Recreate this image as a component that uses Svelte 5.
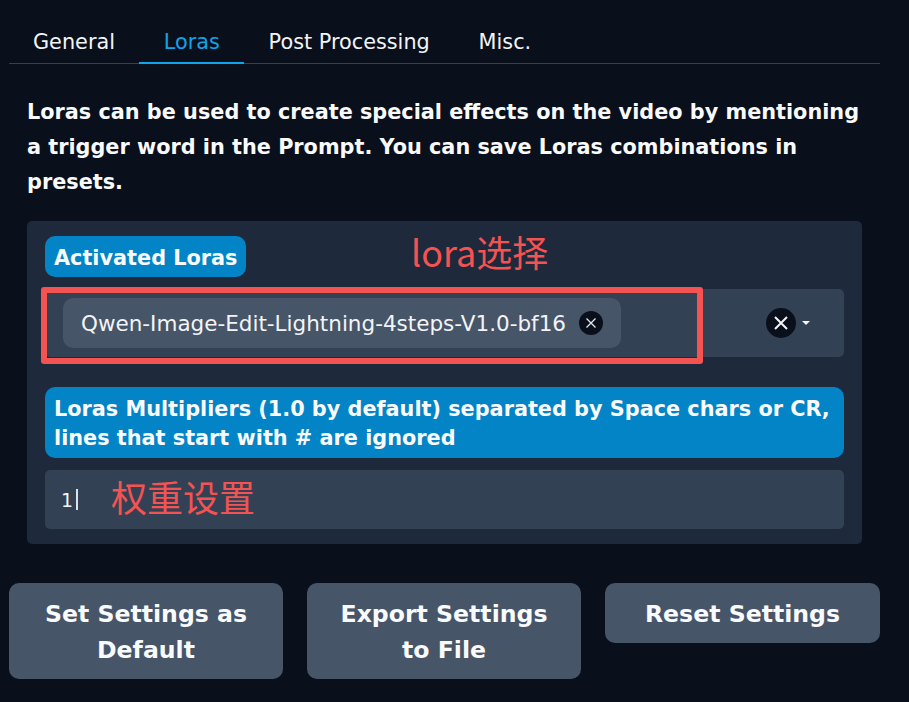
<script>
  const tabs = ['General', 'Loras', 'Post Processing', 'Misc.'];
  const selected = 'Loras';
  const buttons = ['Set Settings as Default', 'Export Settings to File', 'Reset Settings'];
</script>

<div class="page">
  <div class="tabs">
    {#each tabs as tab}
      <button class="tab" class:active={tab === selected}>{tab}</button>
    {/each}
  </div>

  <p class="intro">
    Loras can be used to create special effects on the video by mentioning a trigger word in the Prompt. You can save Loras combinations in presets.
  </p>

  <div class="card">
    <div class="label short">Activated Loras</div>
    <span class="note note-lora">lora选择</span>
    <div class="select">
      <div class="chip">
        <span>Qwen-Image-Edit-Lightning-4steps-V1.0-bf16</span>
        <span class="chip-x">
          <svg width="12" height="12" viewBox="0 0 12 12"><path d="M1.5 1.5l9 9M10.5 1.5l-9 9" stroke="#e5e7eb" stroke-width="1.3" /></svg>
        </span>
      </div>
      <span class="clear">
        <svg width="14" height="14" viewBox="0 0 14 14"><path d="M1 1l12 12M13 1L1 13" stroke="#f3f4f6" stroke-width="2" /></svg>
      </span>
      <span class="caret"></span>
    </div>
    <div class="highlight"></div>

    <div class="label wide">Loras Multipliers (1.0 by default) separated by Space chars or CR, lines that start with # are ignored</div>
    <div class="textarea">
      <span class="value">1</span><span class="cursor"></span>
      <span class="note note-weight">权重设置</span>
    </div>
  </div>

  <div class="actions">
    {#each buttons as label}
      <button class="action">{label}</button>
    {/each}
  </div>
</div>

<style>
  :global(body) {
    background: #0a0f1c;
  }

  .page {
    box-sizing: border-box;
    width: 909px;
    height: 702px;
    padding: 21px 29px 0 9px;
    font-family: "DejaVu Sans", sans-serif;
    color: #f3f4f6;
    background: #0a0f1c;
    overflow: hidden;
  }

  .tabs {
    display: flex;
    height: 42px;
    border-bottom: 1px solid #334155;
  }

  .tab {
    box-sizing: border-box;
    height: 43px;
    padding: 0 24.4px;
    background: none;
    border: none;
    border-bottom: 2px solid transparent;
    font: 20.8px/38px "DejaVu Sans", sans-serif;
    color: #f3f4f6;
    white-space: nowrap;
  }

  .tab:first-child {
    padding-left: 24px;
  }

  .tab.active {
    color: #0ea5e9;
    border-bottom-color: #0ea5e9;
  }

  .intro {
    margin: 31px 0 21px 18px;
    width: 840px;
    font-size: 20.8px;
    line-height: 35px;
    font-weight: 700;
    color: #f9fafb;
  }

  .card {
    position: relative;
    box-sizing: border-box;
    width: 835px;
    height: 323px;
    margin-left: 18px;
    padding: 15px 18px;
    background: #1e293b;
    border-radius: 5px;
  }

  .label {
    box-sizing: border-box;
    padding: 4px 9px;
    background: #0284c7;
    border-radius: 10px;
    font-size: 20.8px;
    line-height: 29px;
    font-weight: 700;
    color: #f9fafb;
  }

  .label.short {
    width: 201px;
    height: 41px;
    padding-top: 8px;
    white-space: nowrap;
  }

  .label.wide {
    height: 71px;
    margin-top: 30px;
    padding-top: 8px;
  }

  .select {
    display: flex;
    align-items: center;
    box-sizing: border-box;
    height: 68px;
    margin-top: 12px;
    padding-left: 18px;
    background: #334155;
    border-radius: 5px;
  }

  .chip {
    display: flex;
    align-items: center;
    box-sizing: border-box;
    width: 558px;
    height: 50px;
    padding: 0 18px;
    background: #475569;
    border-radius: 10px;
    font-size: 21.5px;
    white-space: nowrap;
  }

  .chip-x {
    display: flex;
    align-items: center;
    justify-content: center;
    width: 24px;
    height: 24px;
    margin-left: auto;
    background: #0a0f1c;
    border-radius: 50%;
  }

  .clear {
    display: flex;
    align-items: center;
    justify-content: center;
    width: 30px;
    height: 30px;
    margin-left: 145px;
    background: #0a0f1c;
    border-radius: 50%;
  }

  .caret {
    width: 0;
    height: 0;
    margin-left: 6px;
    border: 4px solid transparent;
    border-top-color: #f3f4f6;
    border-bottom: none;
  }

  .highlight {
    position: absolute;
    left: 14px;
    top: 66px;
    width: 662px;
    height: 77px;
    box-sizing: border-box;
    border: 6px solid #f55252;
    border-radius: 3px;
  }

  .note {
    position: absolute;
    color: #f55252;
    font-family: "Noto Sans CJK SC", "DejaVu Sans", sans-serif;
    font-size: 36px;
    line-height: 40px;
    white-space: nowrap;
  }

  .note-lora {
    left: 384px;
    top: 10px;
  }

  .note-weight {
    left: 84px;
    top: 255px;
  }

  .textarea {
    display: flex;
    align-items: center;
    height: 59px;
    margin-top: 12px;
    padding-left: 16px;
    background: #334155;
    border-radius: 5px;
    font-size: 19px;
  }

  .cursor {
    width: 2px;
    height: 21px;
    margin-left: 3px;
    background: #dbe2ea;
  }

  .actions {
    display: grid;
    grid-template-columns: 274px 274px 1fr;
    align-items: start;
    gap: 24px;
    margin-top: 39px;
  }

  .action {
    box-sizing: border-box;
    padding: 13px 28px 11px;
    background: #475569;
    border: none;
    border-radius: 10px;
    font: 700 23.6px/36px "DejaVu Sans", sans-serif;
    color: #f9fafb;
    text-align: center;
  }
</style>
